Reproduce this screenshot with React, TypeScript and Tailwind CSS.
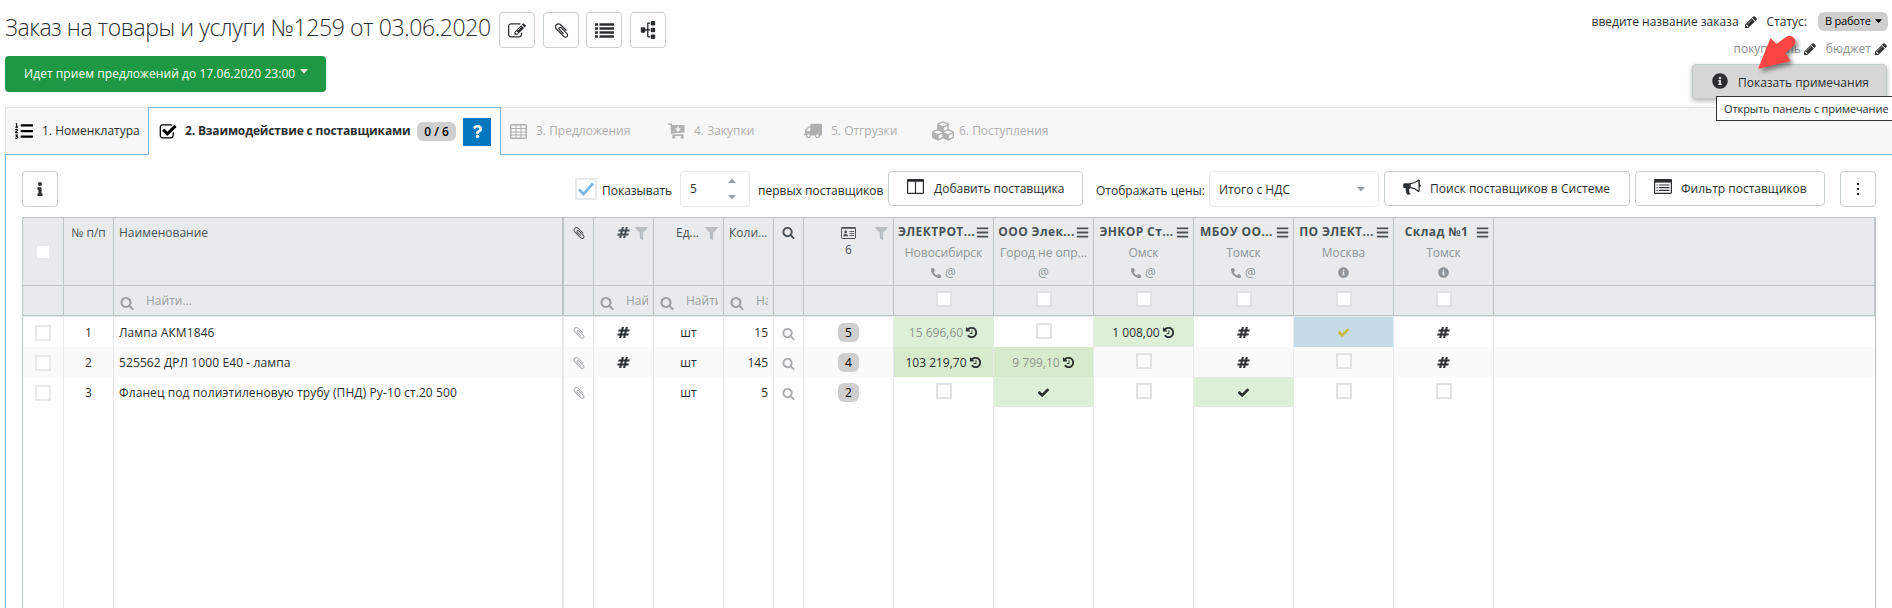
import React from 'react';
import clsx from 'clsx';
import {
  FaBars,
  FaCubes,
  FaFilter,
  FaInfo,
  FaInfoCircle,
  FaListOl,
  FaPhoneAlt,
  FaQuestion,
  FaSitemap,
  FaTruck,
} from 'react-icons/fa';

const GLYPHS = {
  edit: 'M888 1184l116-116-152-152-116 116v56h96v96h56zm440-720q-16-16-33 1l-350 350q-17 17-1 33t33-1l350-350q17-17 1-33zm80 594v190q0 119-84.5 203.5t-203.5 84.5h-832q-119 0-203.5-84.5t-84.5-203.5v-832q0-119 84.5-203.5t203.5-84.5h832q63 0 117 25 15 7 18 23 3 17-9 29l-49 49q-14 14-32 8-23-6-45-6h-832q-66 0-113 47t-47 113v832q0 66 47 113t113 47h832q66 0 113-47t47-113v-126q0-13 9-22l64-64q15-15 35-7t20 29zm-96-738l288 288-672 672h-288v-288zm444 132l-92 92-288-288 92-92q28-28 68-28t68 28l152 152q28 28 28 68t-28 68z',
  clip: 'M1596 1385q0 117-79 196t-196 79q-135 0-235-100l-777-776q-113-115-113-271 0-159 110-270t269-111q158 0 273 113l605 606q10 10 10 22 0 16-30.5 46.5t-46.5 30.5q-13 0-23-10l-606-607q-79-77-181-77-106 0-179 75t-73 181q0 105 76 181l776 777q63 63 145 63 64 0 106-42t42-106q0-82-63-145l-581-581q-26-24-60-24-29 0-48 19t-19 48q0 32 25 59l410 410q10 10 10 22 0 16-31 47t-47 31q-12 0-22-10l-410-410q-63-61-63-149 0-82 57-139t139-57q88 0 149 63l581 581q100 98 100 235z',
  checkSquare: 'M1472 930v318q0 119-84.5 203.5t-203.5 84.5h-832q-119 0-203.5-84.5t-84.5-203.5v-832q0-119 84.5-203.5t203.5-84.5h832q63 0 117 25 15 7 18 23 3 17-9 29l-49 49q-10 10-23 10-3 0-9-2-23-6-45-6h-832q-66 0-113 47t-47 113v832q0 66 47 113t113 47h832q66 0 113-47t47-113v-254q0-13 9-22l64-64q10-10 23-10 6 0 12 3 20 8 20 29zm231-489l-814 814q-24 24-57 24t-57-24l-430-430q-24-24-24-57t24-57l110-110q24-24 57-24t57 24l263 263 647-647q24-24 57-24t57 24l110 110q24 24 24 57t-24 57z',
  search: 'M1216 832q0-185-131.5-316.5t-316.5-131.5-316.5 131.5-131.5 316.5 131.5 316.5 316.5 131.5 316.5-131.5 131.5-316.5zm512 832q0 52-38 90t-90 38q-54 0-90-38l-343-342q-179 124-399 124-143 0-273.5-55.5t-225-150-150-225-55.5-273.5 55.5-273.5 150-225 225-150 273.5-55.5 273.5 55.5 225 150 150 225 55.5 273.5q0 220-124 399l343 343q37 37 37 90z',
  history: 'M1664 896q0 156-61 298t-164 245-245 164-298 61q-172 0-327-72.5t-264-204.5q-7-10-6.5-22.5t8.5-20.5l137-138q10-9 25-9 16 2 23 12 73 95 179 147t225 52q104 0 198.5-40.5t163.5-109.5 109.5-163.5 40.5-198.5-40.5-198.5-109.5-163.5-163.5-109.5-198.5-40.5q-98 0-188 35.5t-160 101.5l137 138q31 30 14 69-17 40-59 40h-448q-26 0-45-19t-19-45v-448q0-42 40-59 39-17 69 14l130 129q107-101 244.5-156.5t284.5-55.5q156 0 298 61t245 164 164 245 61 298zm-640-288v448q0 14-9 23t-23 9h-320q-14 0-23-9t-9-23v-64q0-14 9-23t23-9h224v-352q0-14 9-23t23-9h64q14 0 23 9t9 23z',
  pencil: 'M491 1536l91-91-235-235-91 91v107h128v128h107zm523-928q0-22-22-22-10 0-17 7l-542 542q-7 7-7 17 0 22 22 22 10 0 17-7l542-542q7-7 7-17zm-54-192l416 416-832 832h-416v-416zm683 96q0 53-37 90l-166 166-416-416 166-165q36-38 90-38 53 0 91 38l235 234q37 39 37 91z',
  hash: 'M991 1024l64-256h-254l-64 256h254zm768-504l-56 224q-7 24-31 24h-327l-64 256h311q15 0 25 12 10 14 6 28l-56 224q-5 24-31 24h-327l-81 328q-7 24-31 24h-224q-16 0-26-12-9-12-6-28l78-312h-254l-81 328q-7 24-31 24h-225q-15 0-25-12-9-12-6-28l78-312h-311q-15 0-25-12-9-12-6-28l56-224q7-24 31-24h327l64-256h-311q-15 0-25-12-10-14-6-28l56-224q5-24 31-24h327l81-328q7-24 32-24h224q15 0 25 12 9 12 6 28l-78 312h254l81-328q7-24 32-24h224q15 0 25 12 9 12 6 28l-78 312h311q15 0 25 12 9 12 6 28z',
  check: 'M1671 566q0 40-28 68l-724 724-136 136q-28 28-68 28t-68-28l-136-136-362-362q-28-28-28-68t28-68l136-136q28-28 68-28t68 28l294 295 656-657q28-28 68-28t68 28l136 136q28 28 28 68z',
  bullhorn: 'M1664 640q53 0 90.5 37.5t37.5 90.5-37.5 90.5-90.5 37.5v384q0 52-38 90t-90 38q-417-347-812-380-58 19-91 66t-31 100.5 40 92.5q-20 33-23 65.5t6 58 33.5 55 48 50 61.5 50.5q-29 58-111.5 83t-168.5 11.5-113.500-55.500q-7-23-29.500-87.500t-32-94.500-23-89-15-101 3.500-98.500 22-110.500h-122q-66 0-113-47t-47-113v-192q0-66 47-113t113-47h480q435 0 896-384 52 0 90 38t38 90v384zm-128 604v-954q-394 302-768 343v270q377 42 768 341z',
};

interface GlyphProps {
  name: keyof typeof GLYPHS;
  className?: string;
}

const Glyph: React.FC<GlyphProps> = ({ name, className }) => (
  <svg viewBox="0 0 1792 1792" fill="currentColor" className={clsx('shrink-0', className)}>
    <path d={GLYPHS[name]} />
  </svg>
);

const Caret = ({ className }: { className?: string }) => (
  <svg viewBox="0 0 8 5" fill="currentColor" className={clsx('h-[5px] w-2 shrink-0', className)}>
    <path d="M0 0h8L4 4.600z" />
  </svg>
);

const ListIcon = ({ className }: { className?: string }) => (
  <svg viewBox="0 0 19 15" stroke="currentColor" strokeWidth="2.4" className={className}>
    <path d="M0 1.500h3M0 5.500h3M0 9.500h3M0 13.500h3M4.500 1.500H19M4.500 5.500H19M4.500 9.500H19M4.500 13.500H19" />
  </svg>
);

const TableIcon = ({ className }: { className?: string }) => (
  <svg viewBox="0 0 17 15" fill="none" stroke="currentColor" className={className}>
    <rect x="0.75" y="0.75" width="15.5" height="13.5" rx="1" strokeWidth="1.5" />
    <path d="M1 4.5h15M1 8h15M1 11h15M6 1v13M11 1v13" />
  </svg>
);

const ColumnsIcon = ({ className }: { className?: string }) => (
  <svg viewBox="0 0 17 15" fill="none" stroke="currentColor" className={className}>
    <rect x="0.6" y="0.6" width="15.8" height="13.8" rx="0.6" strokeWidth="1.2" />
    <path d="M0.5 1.5h16" strokeWidth="2.6" />
    <path d="M8.5 2v12.5" strokeWidth="1.2" />
  </svg>
);

const ListAltIcon = ({ className }: { className?: string }) => (
  <svg viewBox="0 0 18 15" fill="none" stroke="currentColor" className={className}>
    <rect x="0.6" y="0.6" width="16.8" height="13.8" rx="0.8" strokeWidth="1.2" />
    <path d="M0.5 2h17" strokeWidth="3.2" />
    <path d="M2.5 6h1.3M2.5 8.7h1.3M2.5 11.4h1.3M5 6h10.5M5 8.7h10.5M5 11.4h10.5" strokeWidth="1.2" />
  </svg>
);

const CartIcon = ({ className }: { className?: string }) => (
  <svg viewBox="0 0 17 16" className={className}>
    <path d="M0 1.2h3.2l.5 8.8h1" fill="none" stroke="currentColor" strokeWidth="1.5" />
    <path d="M3.6 2H16.5v7.6L4.3 10.6z" fill="currentColor" />
    <path d="M4.5 12.2h11" stroke="currentColor" strokeWidth="1.6" />
    <circle cx="5.8" cy="14.3" r="1.5" fill="currentColor" />
    <circle cx="14.2" cy="14.3" r="1.5" fill="currentColor" />
    <path d="M10 3v4.6M7.7 5.6L10 7.9l2.3-2.3" fill="none" stroke="#f7f7f7" strokeWidth="1.4" />
  </svg>
);

const CardIcon = ({ className }: { className?: string }) => (
  <svg viewBox="0 0 15 12" className={className}>
    <rect x="0.5" y="0.5" width="14" height="11" rx="0.8" fill="none" stroke="currentColor" />
    <path d="M0.5 1h14" stroke="currentColor" strokeWidth="1.6" />
    <circle cx="4.6" cy="4.9" r="1.4" fill="currentColor" />
    <path d="M2.2 9.2c0-3.4 4.8-3.4 4.8 0z" fill="currentColor" />
    <path d="M8.5 4.5H13M8.5 6.5H13M8.5 8.5H13" stroke="currentColor" strokeWidth="0.9" />
  </svg>
);

const IconButton = ({ children, className }: { children: React.ReactNode; className?: string }) => (
  <button className={clsx('flex h-9 w-9 shrink-0 items-center justify-center rounded-sm border border-[#c9d0d1] bg-white', className)}>
    {children}
  </button>
);

const Checkbox = ({ className }: { className?: string }) => (
  <span className={clsx('block h-4 w-4 border-2', className)} />
);

const COLS = 'grid grid-cols-[41px_50px_449px_31px_60px_70px_50px_30px_90px_repeat(6,100px)_1fr]';

interface Supplier {
  name: string;
  city: string;
  contacts: 'phone' | 'mail' | 'info';
}

const suppliers: Supplier[] = [
  { name: 'ЭЛЕКТРОТ...', city: 'Новосибирск', contacts: 'phone' },
  { name: 'ООО Элек...', city: 'Город не опр...', contacts: 'mail' },
  { name: 'ЭНКОР Ст...', city: 'Омск', contacts: 'phone' },
  { name: 'МБОУ ОО...', city: 'Томск', contacts: 'phone' },
  { name: 'ПО ЭЛЕКТ...', city: 'Москва', contacts: 'info' },
  { name: 'Склад №1', city: 'Томск', contacts: 'info' },
];

interface Offer {
  kind: 'price' | 'box' | 'hash' | 'check';
  price?: string;
  muted?: boolean;
  tone?: 'green' | 'darkGreen' | 'blue';
}

interface Row {
  name: string;
  hash: boolean;
  qty: string;
  count: number;
  offers: Offer[];
}

const rows: Row[] = [
  {
    name: 'Лампа АКМ1846',
    hash: true,
    qty: '15',
    count: 5,
    offers: [
      { kind: 'price', price: '15 696,60', muted: true, tone: 'green' },
      { kind: 'box' },
      { kind: 'price', price: '1 008,00', tone: 'green' },
      { kind: 'hash' },
      { kind: 'check', tone: 'blue' },
      { kind: 'hash' },
    ],
  },
  {
    name: '525562 ДРЛ 1000 Е40 - лампа',
    hash: true,
    qty: '145',
    count: 4,
    offers: [
      { kind: 'price', price: '103 219,70', tone: 'darkGreen' },
      { kind: 'price', price: '9 799,10', muted: true, tone: 'darkGreen' },
      { kind: 'box' },
      { kind: 'hash' },
      { kind: 'box' },
      { kind: 'hash' },
    ],
  },
  {
    name: 'Фланец под полиэтиленовую трубу (ПНД) Ру-10 ст.20 500',
    hash: false,
    qty: '5',
    count: 2,
    offers: [
      { kind: 'box' },
      { kind: 'check', tone: 'green' },
      { kind: 'box' },
      { kind: 'check', tone: 'green' },
      { kind: 'box' },
      { kind: 'box' },
    ],
  },
];

const tones = {
  green: 'bg-[#ddf0d7]',
  darkGreen: 'bg-[#d5ebcb]',
  blue: 'bg-[#c5dbe8]',
};

const OfferCell = ({ offer }: { offer: Offer }) => (
  <div className={clsx('flex items-center justify-center border-l border-[#e7e9ea]', offer.tone && tones[offer.tone])}>
    {offer.kind === 'price' && (
      <>
        <span className={clsx('pt-0.5', offer.muted && 'text-[#8f9492]')}>{offer.price}</span>
        <Glyph name="history" className="ml-0.5 h-[13px] w-[13px]" />
      </>
    )}
    {offer.kind === 'box' && <Checkbox className="mb-0.5 border-[#e1e2e3]" />}
    {offer.kind === 'hash' && <Glyph name="hash" className="mt-px h-[13px] w-[13px]" />}
    {offer.kind === 'check' && (
      <Glyph name="check" className={clsx('mt-px h-[13px] w-[13px]', offer.tone === 'blue' && 'text-[#c9b93f]')} />
    )}
  </div>
);

const PageHeader = () => (
  <header className="flex h-[107px] justify-between">
    <div className="pt-3 pl-[5px]">
      <div className="flex h-9 items-center">
        <h1 className="w-[494px] pb-1.5 text-[23px] leading-8 font-light tracking-[-0.39px] whitespace-nowrap">
          Заказ на товары и услуги №1259 от 03.06.2020
        </h1>
        <IconButton>
          <Glyph name="edit" className="mt-px h-[18px] w-[18px]" />
        </IconButton>
        <IconButton className="ml-2">
          <Glyph name="clip" className="h-[17px] w-[17px]" />
        </IconButton>
        <IconButton className="ml-[7px]">
          <ListIcon className="h-[15px] w-[19px]" />
        </IconButton>
        <IconButton className="ml-2">
          <FaSitemap size={18} className="-rotate-90" />
        </IconButton>
      </div>
      <button className="mt-2 flex h-9 w-[321px] items-center rounded-sm bg-[#1f9844] pl-[19px] text-white">
        <span className="tracking-[0.06px]">Идет прием предложений до 17.06.2020 23:00</span>
        <Caret className="mb-[5px] ml-[5px]" />
      </button>
    </div>

    <div className="relative flex flex-col items-end pt-3 pr-1">
      <div className="flex h-[19px] items-center">
        <span>введите название заказа</span>
        <Glyph name="pencil" className="ml-[5px] h-[14px] w-[14px]" />
        <span className="ml-[9px]">Статус:</span>
        <span className="ml-[11px] flex h-[19px] w-[70px] items-center justify-between rounded-md bg-[#cfcfcf] pr-[6px] pl-[7px] whitespace-nowrap text-black">
          <span className="text-[11px] tracking-[-0.2px]">В работе</span>
          <Caret className="w-[7px]" />
        </span>
      </div>
      <div className="mt-[9px] flex h-[18px] items-center text-[#8f9292]">
        <span>покупатель</span>
        <Glyph name="pencil" className="ml-0.5 h-[14px] w-[14px] text-[#333]" />
        <span className="ml-[9px]">бюджет</span>
        <Glyph name="pencil" className="ml-[3px] h-[14px] w-[14px] text-[#333]" />
      </div>
      <button className="mt-[6px] mr-px flex h-[35px] w-[195px] shrink-0 items-center rounded-sm border border-[#c3cccc] bg-[#d7d7d7] pl-[19px] shadow-[0_2px_5px_rgba(0,0,0,0.3)]">
        <FaInfoCircle size={16} className="mb-0.5" />
        <span className="ml-[10px] pt-0.5">Показать примечания</span>
      </button>

      {/* hover tooltip, runs up to the right edge of the window */}
      <div className="absolute top-24 right-0 z-10 h-[25px] w-44 border-y border-l border-[#333] bg-white pl-[7px] text-[11px] leading-[23px] tracking-[-0.08px] whitespace-nowrap">
        Открыть панель с примечание
      </div>
      {/* pointer arrow */}
      <svg
        viewBox="0 0 38 34"
        fill="#ff4444"
        className="absolute top-[36px] right-[96px] z-20 h-[34px] w-[38px] drop-shadow-[3px_3px_2px_rgba(0,0,0,0.45)]"
      >
        <path d="M0 33L12.500 2l6 6L28 1q4-2.500 7.500 0.500 3.500 4 0.500 8l-8.500 7.500 5 8z" />
      </svg>
    </div>
  </header>
);

const Tabs = () => (
  <nav className="ml-[5px] flex h-12 border-t border-b border-t-[#e4e4e4] border-b-[#7ab6e8] bg-[#f7f7f7]">
    <div className="flex w-[143px] items-center border-l border-[#e4e4e4] pl-[9px]">
      <FaListOl size={18} className="text-black" />
      <span className="ml-[9px]">1. Номенклатура</span>
    </div>
    <div className="-mt-px flex h-12 w-[353px] items-center border-x border-t border-[#7ab6e8] bg-white pl-[10px]">
      <Glyph name="checkSquare" className="h-[18px] w-[18px] text-black" />
      <span className="ml-[8px] w-[232px] pb-0.5 font-bold tracking-[-0.16px] whitespace-nowrap">2. Взаимодействие с поставщиками</span>
      <span className="h-[19px] w-[39px] rounded-md bg-[#cfcfcf] text-center leading-[19px] font-semibold text-black">0 / 6</span>
      <span className="ml-[7px] flex h-7 w-7 items-center justify-center rounded-[1px] bg-[#0277bf] text-white">
        <FaQuestion size={13} />
      </span>
    </div>
    <div className="flex items-center text-[#b0b0b0]">
      <TableIcon className="ml-[9px] h-[15px] w-[17px]" />
      <span className="ml-[9px] w-[132px]">3. Предложения</span>
      <CartIcon className="h-4 w-[17px]" />
      <span className="ml-[9px] w-[110px]">4. Закупки</span>
      <FaTruck size={18} className="-scale-x-100" />
      <span className="ml-[9px] w-[101px]">5. Отгрузки</span>
      <FaCubes size={22} />
      <span className="ml-[5px]">6. Поступления</span>
    </div>
  </nav>
);

const Toolbar = () => (
  <div className="flex h-9">
    <IconButton>
      <FaInfo size={14} />
    </IconButton>
    <div className="ml-[517px] flex items-center">
      <span className="flex h-[22px] w-[22px] items-center justify-center border-2 border-[#e7e9ea]">
        <svg viewBox="0 0 16 14" className="h-[14px] w-4" fill="none" stroke="#7ab6e8" strokeWidth="2.8">
          <path d="M1 7.500l4.500 4.500L15 1.500" />
        </svg>
      </span>
      <span className="ml-[5px] w-[78px] pt-[3px]">Показывать</span>
    </div>
    <div className="flex w-[70px] justify-between rounded-sm border border-[#e7e9ea] pr-[13px] pl-[9px] leading-[34px]">
      5
      <span className="flex flex-col justify-center gap-3 text-[#9ba1a6]">
        <Caret className="-scale-y-100" />
        <Caret />
      </span>
    </div>
    <span className="ml-2 w-[130px] pt-0.5 leading-9 whitespace-nowrap">первых поставщиков</span>
    <button className="flex h-[35px] w-[195px] items-center rounded-sm border border-[#c9d0d1] pl-[18px]">
      <ColumnsIcon className="mb-1 h-[15px] w-[17px]" />
      <span className="ml-[10px]">Добавить поставщика</span>
    </button>
    <span className="ml-[13px] w-[113px] pt-0.5 leading-9 whitespace-nowrap">Отображать цены:</span>
    <div className="flex w-[170px] items-center justify-between rounded-sm border border-[#e7e9ea] pr-[13px] pl-[9px]">
      <span className="pt-px">Итого с НДС</span>
      <Caret className="text-[#9ba1a6]" />
    </div>
    <button className="ml-[5px] flex h-[35px] w-[246px] items-center rounded-sm border border-[#c9d0d1] pl-[18px]">
      <Glyph name="bullhorn" className="mb-1 h-[18px] w-[18px]" />
      <span className="ml-[9px] tracking-[0.04px]">Поиск поставщиков в Системе</span>
    </button>
    <button className="ml-[5px] flex h-[35px] w-[190px] items-center rounded-sm border border-[#c9d0d1] pl-[18px]">
      <ListAltIcon className="mb-1 h-[15px] w-[18px]" />
      <span className="ml-[9px]">Фильтр поставщиков</span>
    </button>
    <IconButton className="ml-[15px]">
      <span className="flex flex-col gap-[3px]">
        <i className="h-0.5 w-0.5 bg-[#222]" />
        <i className="h-0.5 w-0.5 bg-[#222]" />
        <i className="h-0.5 w-0.5 bg-[#222]" />
      </span>
    </IconButton>
  </div>
);

const SearchCell = () => (
  <div className="flex items-center overflow-hidden border-l border-[#bcc5c5] pr-[5px] pl-[6px] text-[#9b9fa2]">
    <Glyph name="search" className="mt-1 h-[14px] w-[14px]" />
    <span className="ml-3 overflow-hidden whitespace-nowrap">Найти...</span>
  </div>
);

const GridHeader = () => (
  <div className="-mr-px border-t border-r-2 border-[#bcc5c5] bg-[#e8eaeb] text-[#4a5258]">
    <div className={clsx(COLS, 'h-[67px] leading-[18px]')}>
      <div className="flex items-center justify-center border-l border-[#bcc5c5]">
        <span className="h-3 w-3 bg-white" />
      </div>
      <div className="border-l border-[#bcc5c5] pt-1.5 text-center">№ п/п</div>
      <div className="border-l border-[#bcc5c5] pt-1.5 pl-[5px]">Наименование</div>
      <div className="flex justify-center border-l-2 border-[#bcc5c5] pt-2">
        <Glyph name="clip" className="h-[14px] w-[14px]" />
      </div>
      <div className="flex justify-end border-l border-[#bcc5c5] pt-2 pr-[5px]">
        <Glyph name="hash" className="h-[13px] w-[13px]" />
        <FaFilter size={13} className="mt-px ml-[5px] text-[#b9bec2]" />
      </div>
      <div className="flex justify-end border-l border-[#bcc5c5] pt-1.5 pr-[5px]">
        Ед...
        <FaFilter size={13} className="mt-[3px] ml-[6px] text-[#b9bec2]" />
      </div>
      <div className="border-l border-[#bcc5c5] pt-1.5 pl-[5px]">Коли...</div>
      <div className="flex justify-center border-l border-[#bcc5c5] pt-2">
        <Glyph name="search" className="h-[13px] w-[13px]" />
      </div>
      <div className="relative flex flex-col items-center border-l border-[#bcc5c5] pt-[9px]">
        <CardIcon className="h-3 w-[15px]" />
        <span className="pt-0.5">6</span>
        <FaFilter size={13} className="absolute top-[9px] right-[5px] text-[#b9bec2]" />
      </div>
      {suppliers.map((s) => (
        <div key={s.name} className="border-l border-[#bcc5c5] pt-[5px] text-center">
          <div className="flex items-center pr-1 pl-[3px]">
            <span className="flex-1 text-center font-bold tracking-[0.38px] whitespace-nowrap">{s.name}</span>
            <FaBars size={13} className="shrink-0" />
          </div>
          <div className="pt-[3px] text-[#8f9598]">{s.city}</div>
          <div className="flex h-[18px] items-center justify-center gap-1 pt-[3px] text-[#8f9598]">
            {s.contacts === 'phone' && <FaPhoneAlt size={10} />}
            {s.contacts !== 'info' && <span>@</span>}
            {s.contacts === 'info' && <FaInfoCircle size={11} />}
          </div>
        </div>
      ))}
      <div className="border-l border-[#bcc5c5]" />
    </div>
    <div className={clsx(COLS, 'h-[31px] border-y border-[#bcc5c5]')}>
      <div className="border-l border-[#bcc5c5]" />
      <div className="border-l border-[#bcc5c5]" />
      <SearchCell />
      <div className="border-l-2 border-[#bcc5c5]" />
      <SearchCell />
      <SearchCell />
      <SearchCell />
      <div className="border-l border-[#bcc5c5]" />
      <div className="border-l border-[#bcc5c5]" />
      {suppliers.map((s) => (
        <div key={s.name} className="flex items-center justify-center border-l border-[#bcc5c5]">
          <Checkbox className="mb-1 border-[#e0e1e2] bg-white" />
        </div>
      ))}
      <div className="border-l border-[#bcc5c5]" />
    </div>
  </div>
);

const GridRow = ({ row, index }: { row: Row; index: number }) => (
  <div className={clsx(COLS, 'grid-rows-[30px] leading-8', index % 2 === 1 && 'bg-[#fafafa]')}>
    <div className="flex items-center justify-center border-l border-[#bcc5c5]">
      <Checkbox className="mt-0.5 border-[#e7e9ea] bg-white" />
    </div>
    <div className="border-l border-[#e7e9ea] text-center">{index + 1}</div>
    <div className="border-l border-[#e7e9ea] pl-[5px] tracking-[0.1px]">{row.name}</div>
    <div className="flex items-center justify-center border-l-2 border-[#e7e9ea] text-[#a9adaf]">
      <Glyph name="clip" className="mt-px h-[14px] w-[14px]" />
    </div>
    <div className="flex items-center justify-center border-l border-[#e7e9ea]">
      {row.hash && <Glyph name="hash" className="mt-px h-[13px] w-[13px]" />}
    </div>
    <div className="border-l border-[#e7e9ea] text-center">шт</div>
    <div className="border-l border-[#e7e9ea] pr-[5px] text-right">{row.qty}</div>
    <div className="flex items-center justify-center border-l border-[#e7e9ea] text-[#a9adaf]">
      <Glyph name="search" className="mt-0.5 h-[13px] w-[13px]" />
    </div>
    <div className="flex items-center justify-center border-l border-[#e7e9ea]">
      <span className="mt-px h-[19px] w-[21px] rounded-md bg-[#cfcfcf] text-center leading-[19px] text-black">{row.count}</span>
    </div>
    {row.offers.map((offer, i) => (
      <OfferCell key={i} offer={offer} />
    ))}
    <div className="border-l border-[#e7e9ea]" />
  </div>
);

export default function App() {
  return (
    <div className="flex h-[608px] w-[1892px] flex-col overflow-hidden bg-white font-['Open_Sans','Noto_Sans',sans-serif] text-xs text-[#2c2f31]">
      <PageHeader />
      <Tabs />
      <main className="ml-[5px] flex flex-1 flex-col border-l border-[#7ab6e8] pt-4 pr-4 pl-4">
        <Toolbar />
        <div className="mt-[10px] flex flex-1 flex-col border-r border-[#bcc0c1]">
          <GridHeader />
          <div className="h-px bg-[#e9ebec]" />
          {rows.map((row, i) => (
            <GridRow key={row.name} row={row} index={i} />
          ))}
          <div className={clsx(COLS, 'flex-1')}>
            {Array.from({ length: 16 }, (_, i) => (
              <div
                key={i}
                className={clsx(i === 3 ? 'border-l-2' : 'border-l', i === 0 ? 'border-[#bcc5c5]' : 'border-[#e7e9ea]')}
              />
            ))}
          </div>
        </div>
      </main>
    </div>
  );
}
